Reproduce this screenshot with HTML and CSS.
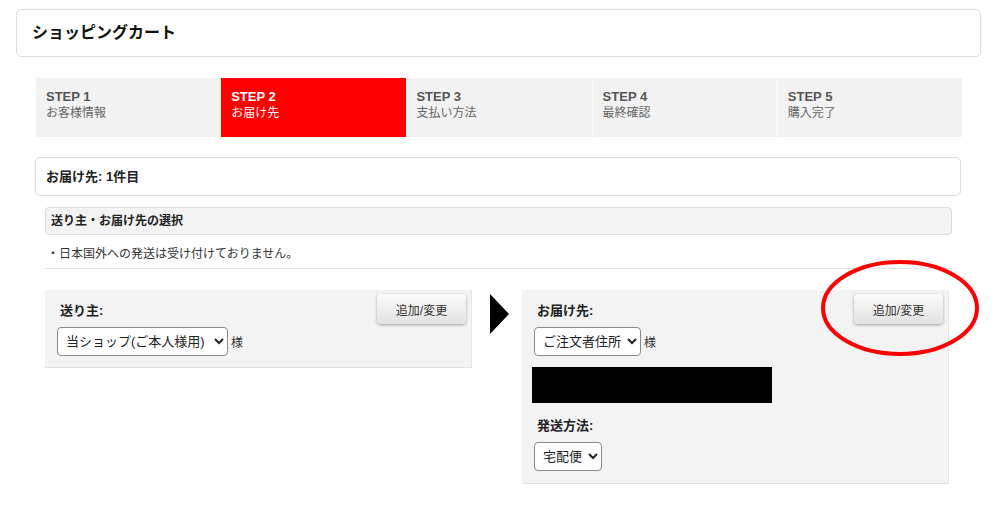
FILE: index.html
```html
<!DOCTYPE html>
<html lang="ja">
<head>
<meta charset="utf-8">
<title>ショッピングカート</title>
<link rel="stylesheet" href="styles.css">
</head>
<body>
<div class="page">
  <div class="header"><h1 class="title">ショッピングカート</h1></div>
  <div class="content">
    <ol class="steps">
      <li class="step"><span class="step-no">STEP 1</span><span class="step-name">お客様情報</span></li>
      <li class="step active"><span class="step-no">STEP 2</span><span class="step-name">お届け先</span></li>
      <li class="step"><span class="step-no">STEP 3</span><span class="step-name">支払い方法</span></li>
      <li class="step sep"><span class="step-no">STEP 4</span><span class="step-name">最終確認</span></li>
      <li class="step sep"><span class="step-no">STEP 5</span><span class="step-name">購入完了</span></li>
    </ol>
    <div class="count-box">お届け先: 1件目</div>
    <div class="inner">
      <div class="sub-head">送り主・お届け先の選択</div>
      <p class="note">・日本国外への発送は受け付けておりません。</p>
      <div class="panels">
        <div class="panel">
          <div class="panel-head">
            <span class="label">送り主:</span>
            <button class="btn">追加/変更</button>
          </div>
          <div class="sel-row">
            <select class="sel sel-wide"><option>当ショップ(ご本人様用)</option></select><span class="sama">様</span>
          </div>
        </div>
        <div class="arrow"></div>
        <div class="panel panel-right">
          <div class="panel-head">
            <span class="label">お届け先:</span>
            <button class="btn">追加/変更</button>
          </div>
          <div class="sel-row">
            <select class="sel"><option>ご注文者住所</option></select><span class="sama">様</span>
          </div>
          <div class="redact"></div>
          <div class="label method">発送方法:</div>
          <div class="sel-row sel-method">
            <select class="sel"><option>宅配便</option></select>
          </div>
          <svg class="circle" width="160" height="100" viewBox="0 0 160 100"><ellipse cx="79" cy="48" rx="77" ry="46" fill="none" stroke="#ff0000" stroke-width="4"/></svg>
        </div>
      </div>
    </div>
  </div>
</div>
</body>
</html>
```
FILE: styles.css
```css
* { box-sizing: border-box; }
body {
  margin: 0;
  background: #fff;
  font-family: "Liberation Sans", "Noto Sans CJK JP", sans-serif;
  color: #222;
}
.page { padding: 9px 19px 0 16px; }
.header {
  height: 48px;
  border: 1px solid #dcdcdc;
  border-radius: 5px;
  padding-left: 15px;
}
.title {
  margin: 0;
  font-size: 16px;
  line-height: 46px;
  font-weight: bold;
  color: #111;
}
.content { margin: 21px 19px 0 19px; }
.steps {
  list-style: none;
  margin: 0 0 0 1px;
  padding: 0;
  display: grid;
  grid-template-columns: repeat(5, 1fr);
  height: 59px;
  background: #f2f2f2;
}
.step {
  padding: 10px 10px 0 10px;
  display: flex;
  flex-direction: column;
  color: #555;
}
.step.sep { border-left: 1px solid #fbfbfb; }
.step-no { font-size: 13px; font-weight: bold; line-height: 17px; }
.step-name { font-size: 12px; line-height: 17px; color: #666; }
.step.active { background: #ff0000; color: #fff; }
.step.active .step-name { color: #fff; }
.count-box {
  margin-top: 20px;
  height: 39px;
  border: 1px solid #dcdcdc;
  border-radius: 5px;
  padding-left: 10px;
  font-size: 13px;
  font-weight: bold;
  line-height: 37px;
  margin-right: 1px;
}
.inner { margin: 0 10px; }
.sub-head {
  margin-top: 11px;
  height: 28px;
  background: #f3f3f3;
  border: 1px solid #dcdcdc;
  border-radius: 4px;
  padding-left: 5px;
  font-size: 12px;
  font-weight: bold;
  line-height: 26px;
}
.note {
  margin: 0;
  padding: 10px 0 4px 2px;
  font-size: 12px;
  line-height: 19px;
  color: #333;
  border-bottom: 1px solid #e2e2e2;
}
.panels {
  display: flex;
  align-items: flex-start;
  margin-top: 21px;
}
.panel {
  position: relative;
  width: 427px;
  background: #f3f3f3;
  border-right: 1px solid #e6e6e6;
  border-bottom: 1px solid #e2e2e2;
  padding: 4px 5px 11px 12px;
}
.panel-head {
  display: flex;
  justify-content: space-between;
  align-items: center;
  height: 30px;
}
.label {
  font-size: 13px;
  font-weight: bold;
  margin-left: 3px;
  color: #222;
}
.btn {
  width: 89px;
  height: 30px;
  font-family: inherit;
  font-size: 12px;
  color: #333;
  border: none;
  border-radius: 4px;
  background: linear-gradient(#fbfbfb, #e2e2e2);
  box-shadow: 0 1px 3px rgba(0, 0, 0, 0.35);
  padding: 0;
}
.sel-row {
  display: flex;
  align-items: center;
  margin-top: 3px;
}
.sel-method { margin-top: 7px; }
.sel {
  height: 29px;
  font-family: inherit;
  font-size: 13px;
  color: #222;
  background: #fff;
  border: 1px solid #8a8a8a;
  border-radius: 4px;
  padding: 0 2px 0 4px;
}
.sel-wide { width: 171px; }
.sama { font-size: 12px; margin-left: 3px; color: #333; }
.arrow {
  width: 0;
  height: 0;
  margin: 4px 13px 0 18px;
  border-left: 19px solid #000;
  border-top: 20px solid transparent;
  border-bottom: 20px solid transparent;
}
.panel-right { padding-bottom: 12px; }
.redact {
  width: 240px;
  height: 36px;
  background: #000;
  margin: 11px 0 0 -2px;
}
.method {
  display: block;
  margin-top: 14px;
  line-height: 18px;
}
.circle {
  position: absolute;
  left: 299px;
  top: -30px;
  overflow: visible;
}
```
